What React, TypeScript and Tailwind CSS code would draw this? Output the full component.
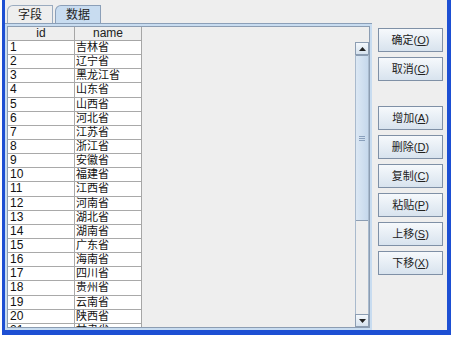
import React from 'react';

const provinces = [
  '吉林省', '辽宁省', '黑龙江省', '山东省', '山西省', '河北省', '江苏省', '浙江省',
  '安徽省', '福建省', '江西省', '河南省', '湖北省', '湖南省', '广东省', '海南省',
  '四川省', '贵州省', '云南省', '陕西省', '甘肃省',
];

const buttons: { label: string; key: string; gapTop?: boolean }[] = [
  { label: '确定', key: 'O' },
  { label: '取消', key: 'C' },
  { label: '增加', key: 'A', gapTop: true },
  { label: '删除', key: 'D' },
  { label: '复制', key: 'C' },
  { label: '粘贴', key: 'P' },
  { label: '上移', key: 'S' },
  { label: '下移', key: 'X' },
];

const font = "font-['Liberation_Sans','Noto_Sans_CJK_SC',sans-serif]";

function ArrowButton({ up }: { up?: boolean }) {
  return (
    <div className="h-[13px] shrink-0 border border-[#8c9db2] bg-gradient-to-b from-[#f4f8fc] to-[#d6e2ee] flex items-center justify-center">
      <svg width="7" height="4" viewBox="0 0 7 4">
        {up ? <polygon points="0,4 7,4 3.5,0" fill="#222" /> : <polygon points="0,0 7,0 3.5,4" fill="#222" />}
      </svg>
    </div>
  );
}

export default function App() {
  return (
    <div className={`w-[454px] h-[341px] bg-white ${font}`}>
      <div className="ml-[2px] w-[449px] h-[335px] border-l-[3px] border-r-[4px] border-b-[5px] border-[#1d4fd3] bg-[#eeeeee] flex overflow-hidden">
        {/* tabbed pane */}
        <div className="w-[367px] min-h-0 flex flex-col">
          <div className="h-[23px] shrink-0 flex items-end pl-[2px] gap-[2px]">
            <div className="w-[46px] h-[18px] border border-b-0 border-[#9aabbf] rounded-tl-[6px] bg-[#eeeeee] flex items-center justify-center text-[12px] text-[#222]">
              字段
            </div>
            <div className="w-[46px] h-[18px] border border-b-0 border-[#8b9fb8] rounded-tl-[6px] bg-[#c8dcf0] flex items-center justify-center text-[12px] text-[#222]">
              数据
            </div>
          </div>
          <div className="h-[1px] shrink-0 bg-[#8b9fb8]" />
          <div className="flex-1 min-h-0 border-2 border-[#c8dcf0] flex flex-col">
            <div className="flex-1 min-h-0 border border-[#8c9db2] bg-[#eeeeee] flex flex-col overflow-hidden">
              {/* column header */}
              <div className="h-[14px] flex shrink-0">
                <div className="w-[67px] border-r border-b border-[#a6a6a6] bg-[#eeeeee] text-[12px] leading-[13px] text-center text-[#222]">id</div>
                <div className="w-[67px] border-r border-b border-[#a6a6a6] bg-[#eeeeee] text-[12px] leading-[13px] text-center text-[#222]">name</div>
              </div>
              <div className="flex-1 flex min-h-0">
                <div className="flex-1 min-h-0 overflow-hidden">
                  <div className="w-[134px] border-r border-[#a6a6a6]">
                    {provinces.map((p, i) => (
                      <div key={i} className="h-[14.15px] flex bg-white text-[#111]">
                        <div className="w-[67px] border-r border-b border-[#a9a9a9] pl-[2px] text-[12px] leading-[13px]">{i + 1}</div>
                        <div className="flex-1 border-b border-[#a9a9a9] pl-[1px] text-[11px] leading-[13px]">{p}</div>
                      </div>
                    ))}
                  </div>
                </div>
                {/* vertical scrollbar */}
                <div className="w-[14px] min-h-0 flex flex-col pt-[1px] bg-[#eeeeee]">
                  <ArrowButton up />
                  <div className="flex-1 min-h-0 border-x border-[#a9bacd] flex flex-col">
                    <div className="h-[166px] border-y border-[#8c9db2] bg-gradient-to-r from-[#dce8f4] to-[#c6d8ec] flex items-center justify-center">
                      <div className="flex flex-col gap-[1px]">
                        <div className="w-[6px] h-[1px] bg-[#8aa0bc]" />
                        <div className="w-[6px] h-[1px] bg-[#8aa0bc]" />
                        <div className="w-[6px] h-[1px] bg-[#8aa0bc]" />
                      </div>
                    </div>
                  </div>
                  <ArrowButton />
                </div>
              </div>
            </div>
          </div>
        </div>

        {/* buttons */}
        <div className="ml-[6px] pt-[28px] flex flex-col gap-[5px]">
          {buttons.map((b, i) => (
            <button
              key={i}
              className={`w-[65px] h-[24px] border border-[#7f90a6] bg-gradient-to-b from-[#f6f9fc] to-[#d8e3ee] text-[11px] text-[#222] flex items-center justify-center ${b.gapTop ? 'mt-[20px]' : ''}`}
            >
              {b.label}(<span className="underline">{b.key}</span>)
            </button>
          ))}
        </div>
      </div>
    </div>
  );
}
